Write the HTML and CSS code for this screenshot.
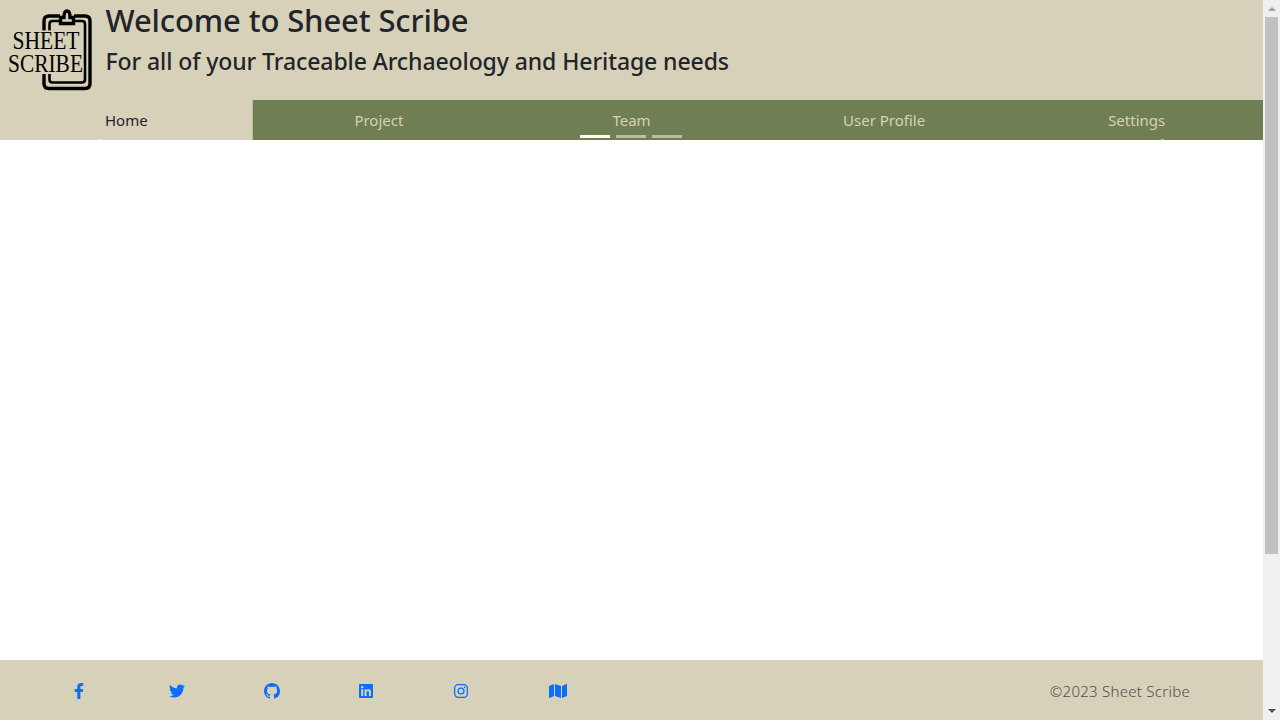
FILE: index.html
```html
<!DOCTYPE html>
<html lang="en">
<head>
<meta charset="utf-8">
<title>Sheet Scribe</title>
<link rel="stylesheet" href="styles.css">
</head>
<body>
<div class="page">
  <header class="header">
    <svg class="logo" viewBox="0 0 100 100" width="100" height="100">
      <g fill="none" stroke="#000" stroke-width="3.400">
        <path d="M44 31V21q0-5 5-5h11M74 16h11q5 0 5 5v62.500q0 5-5 5H49q-5 0-5-5V74"/>
        <path d="M49.500 31V24q0-3 3-3h7M74 21h8q3 0 3 3v55.500q0 3-3 3H52.500q-3 0-3-3V74" stroke-width="2.600"/>
        <path d="M60.500 17.500h3.500q0-6.500 3-6.500t3 6.500h3.500v6h-13z"/>
      </g>
      <g class="logo-text">
        <text x="12.500" y="49" textLength="67" lengthAdjust="spacingAndGlyphs">SHEET</text>
        <text x="8" y="71.500" textLength="75" lengthAdjust="spacingAndGlyphs">SCRIBE</text>
      </g>
    </svg>
    <div class="titles">
      <h1 class="title">Welcome to Sheet Scribe</h1>
      <h2 class="subtitle">For all of your Traceable Archaeology and Heritage needs</h2>
    </div>
  </header>
  <nav class="nav">
    <a class="tab active">Home</a>
    <a class="tab">Project</a>
    <a class="tab">Team</a>
    <a class="tab">User Profile</a>
    <a class="tab">Settings</a>
    <div class="indicators"><i class="on"></i><i></i><i></i></div>
    <i class="arc arc-prev"></i><i class="arc arc-next"></i>
  </nav>
  <main class="content"></main>
  <footer class="footer">
    <div class="social">
      <a><svg width="10" height="16" viewBox="0 0 320 512"><path d="M279.14 288l14.22-92.66h-88.91v-60.13c0-25.35 12.42-50.06 52.24-50.06h40.42V6.26S260.43 0 225.36 0c-73.22 0-121.08 44.38-121.08 124.72v70.62H22.89V288h81.39v224h100.17V288z"/></svg></a>
      <a><svg width="16" height="16" viewBox="0 0 512 512"><path d="M459.37 151.716c.325 4.548.325 9.097.325 13.645 0 138.72-105.583 298.558-298.558 298.558-59.452 0-114.68-17.219-161.137-47.106 8.447.974 16.568 1.299 25.34 1.299 49.055 0 94.213-16.568 130.274-44.832-46.132-.975-84.792-31.188-98.112-72.772 6.498.974 12.995 1.624 19.818 1.624 9.421 0 18.843-1.3 27.614-3.573-48.081-9.747-84.143-51.98-84.143-102.985v-1.299c13.969 7.797 30.214 12.67 47.431 13.319-28.264-18.843-46.781-51.005-46.781-87.391 0-19.492 5.197-37.36 14.294-52.954 51.655 63.675 129.3 105.258 216.365 109.807-1.624-7.797-2.599-15.918-2.599-24.04 0-57.828 46.782-104.934 104.934-104.934 30.213 0 57.502 12.67 76.67 33.137 23.715-4.548 46.456-13.32 66.599-25.34-7.798 24.366-24.366 44.833-46.132 57.827 21.117-2.273 41.584-8.122 60.426-16.243-14.292 20.791-32.161 39.308-52.628 54.253z"/></svg></a>
      <a><svg width="16" height="16" viewBox="0 0 16 16"><path d="M8 0C3.58 0 0 3.58 0 8c0 3.54 2.29 6.53 5.47 7.59.4.07.55-.17.55-.38 0-.19-.01-.82-.01-1.49-2.01.37-2.53-.49-2.69-.94-.09-.23-.48-.94-.82-1.13-.28-.15-.68-.52-.01-.53.63-.01 1.08.58 1.23.82.72 1.21 1.87.87 2.33.66.07-.52.28-.87.51-1.07-1.78-.2-3.64-.89-3.64-3.95 0-.87.31-1.59.82-2.15-.08-.2-.36-1.02.08-2.12 0 0 .67-.21 2.2.82.64-.18 1.32-.27 2-.27s1.36.09 2 .27c1.53-1.04 2.2-.82 2.2-.82.44 1.1.16 1.92.08 2.12.51.56.82 1.27.82 2.15 0 3.07-1.87 3.75-3.65 3.95.29.25.54.73.54 1.48 0 1.07-.01 1.93-.01 2.2 0 .21.15.46.55.38A8.01 8.01 0 0016 8c0-4.42-3.58-8-8-8z"/></svg></a>
      <a><svg width="14" height="16" viewBox="0 0 448 512"><path d="M416 32H31.900C14.300 32 0 46.500 0 64.300v383.400C0 465.500 14.300 480 31.900 480H416c17.600 0 32-14.500 32-32.300V64.300c0-17.800-14.400-32.300-32-32.300zM135.400 416H69V202.200h66.500V416zm-33.200-243c-21.300 0-38.500-17.300-38.500-38.500S80.900 96 102.200 96c21.200 0 38.500 17.300 38.500 38.500 0 21.300-17.200 38.500-38.500 38.500zm282.100 243h-66.400V312c0-24.800-.5-56.700-34.500-56.700-34.600 0-39.900 27-39.900 54.900V416h-66.400V202.200h63.700v29.200h.9c8.900-16.800 30.600-34.500 62.900-34.500 67.200 0 79.700 44.300 79.700 101.900V416z"/></svg></a>
      <a><svg width="14" height="16" viewBox="0 0 14 16"><rect x=".65" y="1.650" width="12.700" height="12.700" rx="3.500" fill="none" stroke="#0d6efd" stroke-width="1.300"/><circle cx="7" cy="8" r="2.950" fill="none" stroke="#0d6efd" stroke-width="1.300"/><circle cx="10.700" cy="4.300" r=".85"/></svg></a>
      <a><svg width="18" height="16" viewBox="0 0 576 512"><path d="M0 117.660v346.320c0 11.320 11.430 19.060 21.940 14.860L160 416V32L20.120 87.950A32.006 32.006 0 0 0 0 117.660zM192 416l192 64V96L192 32v384zM554.060 33.160L416 96v384l139.880-55.950A31.996 31.996 0 0 0 576 394.340V48.020c0-11.320-11.430-19.060-21.940-14.860z"/></svg></a>
    </div>
    <span class="copyright">©2023 Sheet Scribe</span>
  </footer>
</div>
<div class="scrollbar">
  <i class="arrow up"></i>
  <div class="thumb"></div>
  <i class="arrow down"></i>
</div>
</body>
</html>
```
FILE: styles.css
```css
* { box-sizing: border-box; }
body {
  margin: 0;
  width: 1280px;
  height: 720px;
  overflow: hidden;
  display: flex;
  background: #fff;
  font: 400 16px/24px "Noto Sans", sans-serif;
  color: #212529;
}
.page { width: 1263px; display: flex; flex-direction: column; }
.header { height: 100px; background: #d6d1b8; display: flex; }
.logo { flex: none; }
.logo-text {
  font: 25.5px "Liberation Serif", serif;
  fill: #000;
  stroke: #d6d1b8;
  stroke-width: 3px;
  paint-order: stroke;
}
.titles { padding: 1px 0 0 5.5px; white-space: nowrap; }
.title { margin: 0 0 8px; font-size: 31px; line-height: 38px; font-weight: 500; letter-spacing: -.12px; }
.subtitle { margin: 0; font-size: 23px; line-height: 29px; font-weight: 500; letter-spacing: -.09px; }
.nav { height: 40px; display: flex; background: #707f53; position: relative; }
.tab {
  flex: 1;
  text-align: center;
  line-height: 40px;
  font-size: 15px;
  color: #d6d1b8;
}
.active { background: #d6d1b8; color: #212529; box-shadow: inset -1px 0 #bdbd9c; }
.indicators { position: absolute; left: 580.4px; top: 35.4px; display: flex; gap: 6px; }
.indicators i { width: 30px; height: 3px; background: #fff; opacity: .5; }
.indicators .on { opacity: 1; }
.arc { position: absolute; top: 39px; width: 3px; height: 1px; background: rgba(255,255,255,.5); }
.arc-prev { left: 99px; }
.arc-next { left: 1161px; }
.content { flex: 1; }
.footer {
  height: 60px;
  padding: 0 73px 0 73.7px;
  background: #d6d1b8;
  display: flex;
  justify-content: space-between;
}
.social { display: flex; padding-top: 23px; }
.social a { width: 94.9px; }
.social a + a { padding-left: .5px; }
.social svg { display: block; fill: #0d6efd; }
.copyright { font-size: 15px; line-height: 63px; color: #4a514c; font-weight: 300; letter-spacing: .27px; }
.scrollbar {
  width: 17px;
  background: #f0f0f0;
  display: flex;
  flex-direction: column;
  align-items: center;
}
.arrow { border: 4px solid transparent; width: 0; height: 0; }
.up { border-top: 0; border-bottom-color: #a3a3a3; margin: 7px 0 6px; }
.thumb { width: 13px; height: 537px; background: #c1c1c1; }
.down { border-bottom: 0; border-top-color: #505050; margin: auto 0 7px; }
```
